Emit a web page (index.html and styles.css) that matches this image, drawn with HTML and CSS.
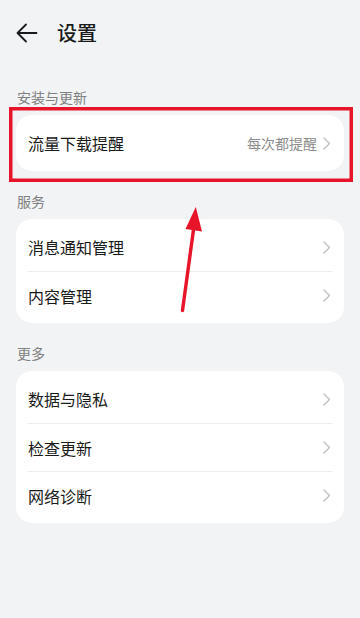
FILE: index.html
```html
<!DOCTYPE html>
<html lang="zh-CN">
<head>
<meta charset="utf-8">
<meta name="viewport" content="width=360">
<title>设置</title>
<link rel="stylesheet" href="styles.css">
</head>
<body>
<div class="page">
  <header class="header">
    <svg class="back" width="22" height="20" viewBox="0 0 22 20" aria-hidden="true">
      <path d="M10 1.5 L1.5 10 L10 18.5 M1.5 10 H20.5" fill="none" stroke="#1a1a1a" stroke-width="1.8" stroke-linecap="round" stroke-linejoin="round"/>
    </svg>
    <h1 class="title">设置</h1>
  </header>

  <section class="section">
    <div class="label">安装与更新</div>
    <div class="card">
      <div class="row">
        <span class="row-text">流量下载提醒</span>
        <span class="row-value">每次都提醒</span>
        <svg class="chev" width="8" height="13" viewBox="0 0 8 13"><path d="M1 1 L6.5 6.5 L1 12" fill="none" stroke="#bdbdbd" stroke-width="1.3" stroke-linecap="round" stroke-linejoin="round"/></svg>
      </div>
    </div>
  </section>

  <section class="section">
    <div class="label">服务</div>
    <div class="card">
      <div class="row">
        <span class="row-text">消息通知管理</span>
        <svg class="chev" width="8" height="13" viewBox="0 0 8 13"><path d="M1 1 L6.5 6.5 L1 12" fill="none" stroke="#bdbdbd" stroke-width="1.3" stroke-linecap="round" stroke-linejoin="round"/></svg>
      </div>
      <div class="row">
        <span class="row-text">内容管理</span>
        <svg class="chev" width="8" height="13" viewBox="0 0 8 13"><path d="M1 1 L6.5 6.5 L1 12" fill="none" stroke="#bdbdbd" stroke-width="1.3" stroke-linecap="round" stroke-linejoin="round"/></svg>
      </div>
    </div>
  </section>

  <section class="section">
    <div class="label">更多</div>
    <div class="card">
      <div class="row">
        <span class="row-text">数据与隐私</span>
        <svg class="chev" width="8" height="13" viewBox="0 0 8 13"><path d="M1 1 L6.5 6.5 L1 12" fill="none" stroke="#bdbdbd" stroke-width="1.3" stroke-linecap="round" stroke-linejoin="round"/></svg>
      </div>
      <div class="row">
        <span class="row-text">检查更新</span>
        <svg class="chev" width="8" height="13" viewBox="0 0 8 13"><path d="M1 1 L6.5 6.5 L1 12" fill="none" stroke="#bdbdbd" stroke-width="1.3" stroke-linecap="round" stroke-linejoin="round"/></svg>
      </div>
      <div class="row">
        <span class="row-text">网络诊断</span>
        <svg class="chev" width="8" height="13" viewBox="0 0 8 13"><path d="M1 1 L6.5 6.5 L1 12" fill="none" stroke="#bdbdbd" stroke-width="1.3" stroke-linecap="round" stroke-linejoin="round"/></svg>
      </div>
    </div>
  </section>

  <svg class="annotation" width="360" height="618" viewBox="0 0 360 618" aria-hidden="true">
    <rect x="10.75" y="108.75" width="340.5" height="71.5" fill="none" stroke="#e8142a" stroke-width="3.5"/>
    <line x1="182.5" y1="310.5" x2="194" y2="226" stroke="#e8142a" stroke-width="3.4" stroke-linecap="round"/>
    <polygon points="195.8,207 185.5,229 202,231.5" fill="#e8142a"/>
  </svg>
</div>
</body>
</html>
```

FILE: styles.css
```css
* {
  box-sizing: border-box;
}

html, body {
  margin: 0;
  padding: 0;
}

body {
  background: #f1f3f5;
  font-family: "Noto Sans CJK SC", "Noto Sans", sans-serif;
  color: #191919;
}

.page {
  position: relative;
  width: 360px;
  min-height: 618px;
  background: #f1f3f5;
}

.header {
  height: 65px;
  display: flex;
  align-items: center;
  padding-left: 16px;
  gap: 19px;
}

.back {
  display: block;
  flex: none;
}

.title {
  margin: 0;
  font-size: 20px;
  font-weight: 500;
  line-height: 28px;
  color: #1a1a1a;
}

.section {
  padding: 0 16px;
}

.label {
  padding: 20px 0 0 1px;
  height: 40px;
  margin-bottom: 8px;
  font-size: 14px;
  line-height: 20px;
  color: #808080;
}

.section:first-of-type .label {
  padding-top: 22px;
  height: 42px;
}

.card {
  background: #ffffff;
  border-radius: 16px;
  padding: 4px 12px;
}

.row {
  height: 48px;
  display: flex;
  align-items: center;
  border-top: 1px solid #ececec;
}

.row:first-child {
  border-top: none;
}

.row-text {
  flex: 1;
  font-size: 16px;
  line-height: 22px;
  color: #1a1a1a;
}

.row-value {
  font-size: 14px;
  line-height: 20px;
  color: #8c8c8c;
  margin-right: 6px;
}

.chev {
  display: block;
  flex: none;
  margin-right: 1px;
}

.annotation {
  position: absolute;
  left: 0;
  top: 0;
  pointer-events: none;
}
```
